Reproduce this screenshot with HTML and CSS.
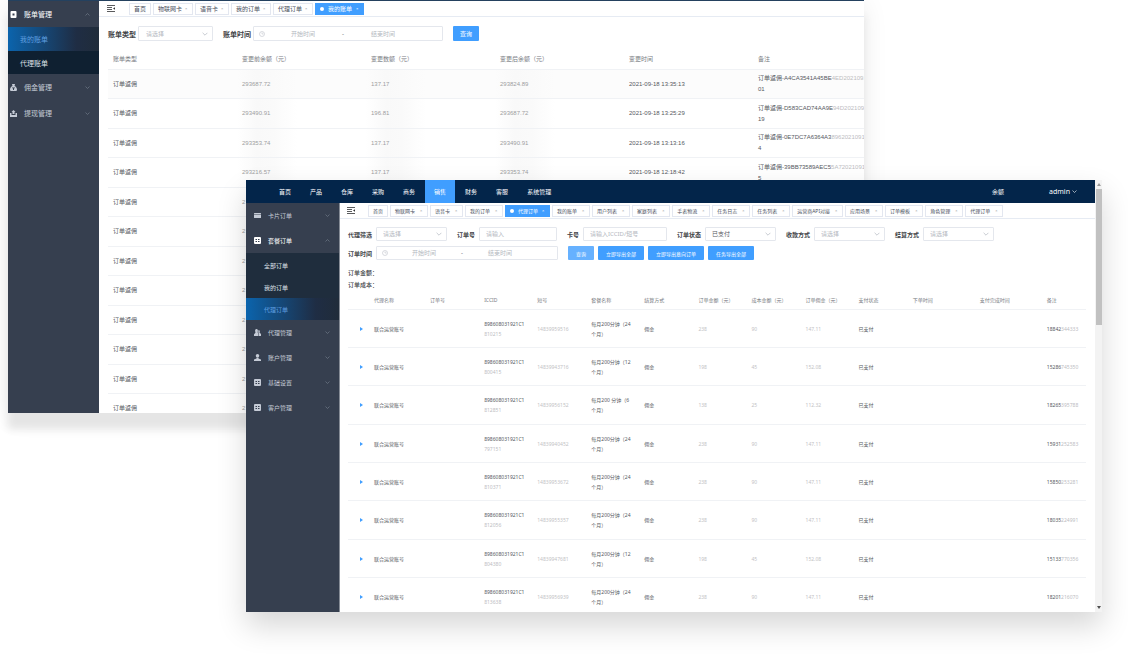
FILE: index.html
```html
<!DOCTYPE html>
<html lang="zh-CN">
<head>
<meta charset="utf-8">
<title>订单与账单管理</title>
<link rel="stylesheet" href="styles.css">
</head>
<body>
<svg class="sprite" aria-hidden="true">
  <symbol id="down" viewBox="0 0 10 6"><path d="M1 1l4 4 4-4" fill="none" stroke="currentColor" stroke-width="1.2"/></symbol>
  <symbol id="up" viewBox="0 0 10 6"><path d="M1 5l4-4 4 4" fill="none" stroke="currentColor" stroke-width="1.2"/></symbol>
  <symbol id="fold" viewBox="0 0 16 14"><path d="M0 1h16M0 5h10M0 9h10M0 13h16" stroke="currentColor" stroke-width="1.600"/><path d="M16 4.500v5L12 7z" fill="currentColor"/></symbol>
  <symbol id="clock" viewBox="0 0 12 12"><circle cx="6" cy="6" r="5" fill="none" stroke="currentColor"/><path d="M6 3v3h3" fill="none" stroke="currentColor"/></symbol>
  <symbol id="bill" viewBox="0 0 14 14"><path fill-rule="evenodd" fill="currentColor" d="M3 0h8a2 2 0 0 1 2 2v10a2 2 0 0 1-2 2H3a2 2 0 0 1-2-2V2a2 2 0 0 1 2-2zm2 5v4h4V5z"/></symbol>
  <symbol id="bag" viewBox="0 0 14 14"><path fill-rule="evenodd" fill="currentColor" d="M4 0h6L9 4c3 1 5 4 5 7 0 2-1 3-3 3H3c-2 0-3-1-3-3 0-3 2-6 5-7zM4 7v1.500h2V12h2V8.500h2V7z"/></symbol>
  <symbol id="withdraw" viewBox="0 0 14 14"><path fill="currentColor" d="M7 0l4 4H9v4H5V4H3zM0 6h3v4h8V6h3v8H0z"/></symbol>
  <symbol id="card" viewBox="0 0 14 14"><path fill="currentColor" d="M1 2h12a1 1 0 0 1 1 1v1H0V3a1 1 0 0 1 1-1zM0 5h14v6a1 1 0 0 1-1 1H1a1 1 0 0 1-1-1z"/></symbol>
  <symbol id="gridbox" viewBox="0 0 14 14"><path fill-rule="evenodd" fill="currentColor" d="M2 0h10a2 2 0 0 1 2 2v10a2 2 0 0 1-2 2H2a2 2 0 0 1-2-2V2a2 2 0 0 1 2-2zm1 4v2h3V4zm5 0v2h3V4zM3 8v2h3V8zm5 0v2h3V8z"/></symbol>
  <symbol id="agents" viewBox="0 0 14 14"><path fill="currentColor" d="M5 0c3 0 3.500 4 2 6.500L9 9v5H0v-3c0-2 3-1.500 3-4.500C1.500 4 2 0 5 0zM9 2c3 0 3 3 2 5l3 3v4h-4V9L8.500 6.500z"/></symbol>
  <symbol id="user" viewBox="0 0 14 14"><circle cx="7" cy="3.500" r="3.500" fill="currentColor"/><path fill="currentColor" d="M5 7h4v2l5 2v3H0v-3l5-2z"/></symbol>
</svg>

<main class="stage">
  <section class="window bills">
    <div class="strip"></div>
    <div class="shell">
      <nav class="side">
        <button class="item on" type="button"><svg class="ico"><use href="#bill"/></svg><span>账单管理</span><svg class="chev"><use href="#up"/></svg></button>
        <div class="sub">
          <a class="leaf active" href="#">我的账单</a>
          <a class="leaf" href="#">代理账单</a>
        </div>
        <button class="item" type="button"><svg class="ico"><use href="#bag"/></svg><span>佣金管理</span><svg class="chev"><use href="#down"/></svg></button>
        <button class="item" type="button"><svg class="ico"><use href="#withdraw"/></svg><span>提现管理</span><svg class="chev"><use href="#down"/></svg></button>
      </nav>
      <div class="content">
        <div class="tabs">
          <svg class="fold"><use href="#fold"/></svg>
          <a class="tab" href="#">首页</a>
          <a class="tab" href="#">物联网卡<i>×</i></a>
          <a class="tab" href="#">语音卡<i>×</i></a>
          <a class="tab" href="#">我的订单<i>×</i></a>
          <a class="tab" href="#">代理订单<i>×</i></a>
          <a class="tab current" href="#"><b></b>我的账单<i>×</i></a>
        </div>
        <div class="body">
          <form class="filters">
            <div class="field"><label for="b-type">账单类型</label><span class="pick"><select id="b-type" class="empty"><option>请选择</option></select><svg><use href="#down"/></svg></span></div>
            <div class="field"><label for="b-from">账单时间</label><span class="range"><svg><use href="#clock"/></svg><input id="b-from" placeholder="开始时间"><span>-</span><input aria-label="结束时间" placeholder="结束时间"></span></div>
            <button class="btn" type="button">查询</button>
          </form>
          <table class="grid">
            <thead><tr><th>账单类型</th><th>变更前余额（元）</th><th>变更数额（元）</th><th>变更后余额（元）</th><th>变更时间</th><th>备注</th></tr></thead>
            <tbody>
              <tr class="hover"><td>订单返佣</td><td class="dim">293687.72</td><td class="dim">137.17</td><td class="dim">293824.89</td><td>2021-09-18 13:35:13</td><td>订单返佣-A4CA3541A45BE<em>4ED20210918</em><br>01</td></tr>
              <tr><td>订单返佣</td><td class="dim">293490.91</td><td class="dim">196.81</td><td class="dim">293687.72</td><td>2021-09-18 13:25:29</td><td>订单返佣-D583CAD74AA9E<em>94D20210918</em><br>19</td></tr>
              <tr><td>订单返佣</td><td class="dim">293353.74</td><td class="dim">137.17</td><td class="dim">293490.91</td><td>2021-09-18 13:13:16</td><td>订单返佣-0E7DC7A6364A3<em>896202109181</em><br>4</td></tr>
              <tr><td>订单返佣</td><td class="dim">293216.57</td><td class="dim">137.17</td><td class="dim">293353.74</td><td>2021-09-18 12:18:42</td><td>订单返佣-39BB73589AEC5<em>5A7202109181</em><br>5</td></tr>
              <tr><td>订单返佣</td><td class="dim">2</td><td></td><td></td><td></td><td></td></tr>
              <tr><td>订单返佣</td><td class="dim">2</td><td></td><td></td><td></td><td></td></tr>
              <tr><td>订单返佣</td><td class="dim">2</td><td></td><td></td><td></td><td></td></tr>
              <tr><td>订单返佣</td><td class="dim">2</td><td></td><td></td><td></td><td></td></tr>
              <tr><td>订单返佣</td><td class="dim">2</td><td></td><td></td><td></td><td></td></tr>
              <tr><td>订单返佣</td><td class="dim">2</td><td></td><td></td><td></td><td></td></tr>
              <tr><td>订单返佣</td><td class="dim">2</td><td></td><td></td><td></td><td></td></tr>
              <tr><td>订单返佣</td><td class="dim">2</td><td></td><td></td><td></td><td></td></tr>
            </tbody>
          </table>
        </div>
      </div>
    </div>
  </section>

  <section class="window orders">
    <div class="app">
      <header class="top">
        <nav class="menu">
          <a href="#">首页</a><a href="#">产品</a><a href="#">仓库</a><a href="#">采购</a><a href="#">商务</a><a class="here" href="#">销售</a><a href="#">财务</a><a href="#">客服</a><a href="#">系统管理</a>
        </nav>
        <a class="balance" href="#">余额</a>
        <button class="account" type="button">admin<svg><use href="#down"/></svg></button>
      </header>
      <div class="shell">
        <nav class="side">
          <button class="item" type="button"><svg class="ico"><use href="#card"/></svg><span>卡片订单</span><svg class="chev"><use href="#down"/></svg></button>
          <button class="item on" type="button"><svg class="ico"><use href="#gridbox"/></svg><span>套餐订单</span><svg class="chev"><use href="#up"/></svg></button>
          <div class="sub">
            <a class="leaf" href="#">全部订单</a>
            <a class="leaf" href="#">我的订单</a>
            <a class="leaf active" href="#">代理订单</a>
          </div>
          <button class="item" type="button"><svg class="ico"><use href="#agents"/></svg><span>代理管理</span><svg class="chev"><use href="#down"/></svg></button>
          <button class="item" type="button"><svg class="ico"><use href="#user"/></svg><span>账户管理</span><svg class="chev"><use href="#down"/></svg></button>
          <button class="item" type="button"><svg class="ico"><use href="#gridbox"/></svg><span>基础设置</span><svg class="chev"><use href="#down"/></svg></button>
          <button class="item" type="button"><svg class="ico"><use href="#gridbox"/></svg><span>客户管理</span><svg class="chev"><use href="#down"/></svg></button>
        </nav>
        <div class="content">
          <div class="tabs">
            <svg class="fold"><use href="#fold"/></svg>
            <a class="tab" href="#">首页</a>
            <a class="tab" href="#">物联网卡<i>×</i></a>
            <a class="tab" href="#">语音卡<i>×</i></a>
            <a class="tab" href="#">我的订单<i>×</i></a>
            <a class="tab current" href="#"><b></b>代理订单<i>×</i></a>
            <a class="tab" href="#">我的账单<i>×</i></a>
            <a class="tab" href="#">用户列表<i>×</i></a>
            <a class="tab" href="#">家庭列表<i>×</i></a>
            <a class="tab" href="#">手表物流<i>×</i></a>
            <a class="tab" href="#">任务日志<i>×</i></a>
            <a class="tab" href="#">任务列表<i>×</i></a>
            <a class="tab" href="#">运营商API对接<i>×</i></a>
            <a class="tab" href="#">应用场景<i>×</i></a>
            <a class="tab" href="#">订单模板<i>×</i></a>
            <a class="tab" href="#">角色管理<i>×</i></a>
            <a class="tab" href="#">代理订单<i>×</i></a>
          </div>
          <div class="body">
            <form>
              <div class="filters">
                <div class="field"><label for="o-agent">代理筛选</label><span class="pick"><select id="o-agent" class="empty"><option>请选择</option></select><svg><use href="#down"/></svg></span></div>
                <div class="field"><label for="o-no">订单号</label><input id="o-no" class="text" placeholder="请输入"></div>
                <div class="field"><label for="o-card">卡号</label><input id="o-card" class="text wide" placeholder="请输入ICCID/短号"></div>
                <div class="field"><label for="o-state">订单状态</label><span class="pick"><select id="o-state"><option>已支付</option></select><svg><use href="#down"/></svg></span></div>
                <div class="field"><label for="o-pay">收款方式</label><span class="pick"><select id="o-pay" class="empty"><option>请选择</option></select><svg><use href="#down"/></svg></span></div>
                <div class="field"><label for="o-settle">结算方式</label><span class="pick"><select id="o-settle" class="empty"><option>请选择</option></select><svg><use href="#down"/></svg></span></div>
              </div>
              <div class="filters">
                <div class="field"><label for="o-from">订单时间</label><span class="range"><svg><use href="#clock"/></svg><input id="o-from" placeholder="开始时间"><span>-</span><input aria-label="结束时间" placeholder="结束时间"></span></div>
                <div class="actions">
                  <button class="btn soft" type="button">查询</button>
                  <button class="btn" type="button">立即导出全部</button>
                  <button class="btn" type="button">立即导出意向订单</button>
                  <button class="btn" type="button">任务导出全部</button>
                </div>
              </div>
            </form>
            <div class="totals"><p>订单金额：</p><p>订单成本：</p></div>
            <table class="grid">
              <colgroup><col class="c-open"><col class="c-agent"><col class="c-even"><col class="c-odd"><col class="c-even"><col class="c-odd"><col class="c-even"><col class="c-odd"><col class="c-even"><col class="c-odd"><col class="c-even"><col class="c-time"><col class="c-time"><col class="c-note"></colgroup>
              <thead><tr><th></th><th>代理名称</th><th>订单号</th><th>ICCID</th><th>短号</th><th>套餐名称</th><th>结算方式</th><th>订单金额（元）</th><th>成本金额（元）</th><th>订单佣金（元）</th><th>支付状态</th><th>下单时间</th><th>支付完成时间</th><th>备注</th></tr></thead>
              <tbody>
                <tr><td><span class="open"></span></td><td>联合运营账号</td><td></td><td>898608031921C1<br><em>810215</em></td><td class="dim">14839959516</td><td>每月200分钟（24<br>个月）</td><td>佣金</td><td class="dim">238</td><td class="dim">90</td><td class="dim">147.11</td><td>已支付</td><td></td><td></td><td>18842<em>344333</em></td></tr>
                <tr><td><span class="open"></span></td><td>联合运营账号</td><td></td><td>898608031921C1<br><em>800415</em></td><td class="dim">14839943716</td><td>每月200分钟（12<br>个月）</td><td>佣金</td><td class="dim">198</td><td class="dim">45</td><td class="dim">152.08</td><td>已支付</td><td></td><td></td><td>15286<em>745350</em></td></tr>
                <tr><td><span class="open"></span></td><td>联合运营账号</td><td></td><td>898608031921C1<br><em>812851</em></td><td class="dim">14839956152</td><td>每月200 分钟（6<br>个月）</td><td>佣金</td><td class="dim">138</td><td class="dim">25</td><td class="dim">112.32</td><td>已支付</td><td></td><td></td><td>18265<em>395788</em></td></tr>
                <tr><td><span class="open"></span></td><td>联合运营账号</td><td></td><td>898608031921C1<br><em>797151</em></td><td class="dim">14839940452</td><td>每月200分钟（24<br>个月）</td><td>佣金</td><td class="dim">238</td><td class="dim">90</td><td class="dim">147.11</td><td>已支付</td><td></td><td></td><td>15931<em>252583</em></td></tr>
                <tr><td><span class="open"></span></td><td>联合运营账号</td><td></td><td>898608031921C1<br><em>810371</em></td><td class="dim">14839953672</td><td>每月200分钟（24<br>个月）</td><td>佣金</td><td class="dim">238</td><td class="dim">90</td><td class="dim">147.11</td><td>已支付</td><td></td><td></td><td>15850<em>253281</em></td></tr>
                <tr><td><span class="open"></span></td><td>联合运营账号</td><td></td><td>898608031921C1<br><em>812056</em></td><td class="dim">14839955357</td><td>每月200分钟（24<br>个月）</td><td>佣金</td><td class="dim">238</td><td class="dim">90</td><td class="dim">147.11</td><td>已支付</td><td></td><td></td><td>18035<em>224991</em></td></tr>
                <tr><td><span class="open"></span></td><td>联合运营账号</td><td></td><td>898608031921C1<br><em>804380</em></td><td class="dim">14839947681</td><td>每月200分钟（12<br>个月）</td><td>佣金</td><td class="dim">198</td><td class="dim">45</td><td class="dim">152.08</td><td>已支付</td><td></td><td></td><td>15133<em>770356</em></td></tr>
                <tr><td><span class="open"></span></td><td>联合运营账号</td><td></td><td>898608031921C1<br><em>813638</em></td><td class="dim">14839956939</td><td>每月200分钟（24<br>个月）</td><td>佣金</td><td class="dim">238</td><td class="dim">90</td><td class="dim">147.11</td><td>已支付</td><td></td><td></td><td>18201<em>216070</em></td></tr>
              </tbody>
            </table>
          </div>
        </div>
      </div>
    </div>
    <div class="scroll"><span class="arrow upward"></span><span class="thumb"></span><span class="arrow downward"></span></div>
  </section>
</main>
</body>
</html>
```

FILE: styles.css
```css
* { box-sizing: border-box; }
body { margin: 0; background: #fff; font-family: "Liberation Sans", "Noto Sans CJK SC", sans-serif; color: #55585e; }
a { color: inherit; text-decoration: none; }
button, input, select { font: inherit; color: inherit; margin: 0; }
button { border: 0; background: none; padding: 0; }
.sprite { display: none; }

/* canvas that holds the two overlapping windows */
.stage { position: relative; min-height: 100vh; overflow: hidden; }
.window { position: absolute; overflow: hidden; background: #fff; }
.bills { top: 0; left: 8px; right: 264px; bottom: 244px; font-size: 6px; display: flex; flex-direction: column; box-shadow: 0 16px 8px #e5e5e5, 0 4px 24px rgba(0, 0, 0, .08); }
.orders { top: 180px; left: 246px; right: 26px; bottom: 45px; font-size: 5px; font-family: "Noto Sans", "Noto Sans CJK SC", sans-serif; display: flex; box-shadow: 0 14px 28px rgba(0, 0, 0, .16); }
.app { flex: 1; min-width: 0; display: flex; flex-direction: column; }
.strip { flex: none; height: 1px; background: #24415f; }
.shell { flex: 1; min-height: 0; display: flex; }
.content { flex: 1; min-width: 0; overflow: hidden; }

/* side menu */
.side { flex: none; width: 91px; background: #363f4f; color: #c5cbd6; font-size: 7px; }
.item { display: flex; align-items: center; width: 100%; height: 26px; padding: 0 9px 0 2px; gap: 7px; text-align: left; }
.item span { flex: 1; }
.item.on { color: #fff; }
.ico { width: 7px; height: 7px; }
.chev { width: 5px; height: 3px; color: #7b8492; }
.sub { background: #0f2031; }
.leaf { display: flex; align-items: center; height: 23px; padding-left: 12px; color: #dfe3ea; }
.leaf.active { color: #5f9fe0; background: linear-gradient(90deg, #0b64ad, #1f2d44 75%, #202c3a); }
.bills .leaf.active { height: 24px; }
.orders .side { width: 94px; font-size: 6px; border-right: 1px solid #868c96; }
.orders .item { height: 25px; padding: 0 9px 0 8px; }
.orders .sub { background: #1f2d3d; padding-top: 1px; }
.orders .leaf { height: 22px; padding-left: 18px; }

/* top bar */
.top { flex: none; display: flex; align-items: stretch; height: 23px; padding: 0 18px 0 24px; background: #03254a; color: #fff; font-size: 6px; }
.menu { flex: 1; display: flex; gap: 1px; }
.menu a { display: flex; align-items: center; padding: 0 9px; }
.menu .here { background: #409eff; }
.balance { display: flex; align-items: center; margin-right: 45px; }
.account { display: flex; align-items: center; gap: 2px; font-size: 7px; }
.account svg { width: 5px; height: 3px; }

/* page tabs */
.tabs { display: flex; align-items: center; gap: 2px; height: 16px; padding-left: 8px; border-bottom: 1px solid #e6ebf3; }
.fold { flex: none; width: 8px; height: 7px; margin-right: 12px; color: #303133; }
.tab { flex: none; display: flex; align-items: center; gap: 3px; height: 12px; padding: 0 4px; border: 1px solid #e3e7f0; color: #495060; white-space: nowrap; }
.tab i { width: 3px; font-style: normal; font-size: 4px; color: #999; }
.tab b { width: 4px; height: 4px; border-radius: 50%; background: #fff; }
.tab.current, .tab.current i { color: #fff; }
.tab.current { gap: 4px; background: #409eff; border-color: #409eff; }
.orders .fold { margin-right: 11px; }
.orders .tabs { padding-left: 7px; }
.orders .tab { gap: 5px; }
.orders .tab.current { gap: 4px; }

/* filters */
.body { padding: 9px 0 0 9px; }
.filters { display: flex; align-items: center; gap: 10px; }
.field { display: flex; align-items: center; gap: 2px; }
label { font-size: 7px; font-weight: bold; color: #404246; white-space: nowrap; }
.pick { position: relative; display: block; }
.pick svg { position: absolute; right: 5px; top: 6px; width: 6px; height: 4px; color: #b4b8c0; }
select, .text, .range { display: block; height: 15px; border: 1px solid #e4e7ed; border-radius: 1px; background: #fff; outline: 0; font-size: 6px; }
select { appearance: none; width: 75px; padding: 0 7px; }
select.empty { color: #b4b8c0; }
.text { width: 78px; padding: 0 6px; }
.text.wide { width: 84px; }
input::placeholder { color: #b4b8c0; opacity: 1; }
.range { display: flex; align-items: center; width: 190px; padding: 0 21px 0 5px; }
.range svg { flex: none; width: 6px; height: 6px; color: #b4b8c0; }
.range input { flex: 1; min-width: 0; border: 0; padding: 0; text-align: center; background: none; outline: 0; }
.range span { width: 4px; text-align: center; }
.btn { height: 15px; padding: 0 7px; border-radius: 1px; background: #409eff; color: #fff; white-space: nowrap; }
.btn.soft { background: #66b1ff; }
.orders .body { padding: 8px 9px 0 8px; }
.orders label { font-size: 6px; }
.orders .field { gap: 4px; }
.orders .filters + .filters { margin-top: 5px; }
.orders select, .orders .text, .orders .range, .orders .btn { height: 14px; }
.orders .pick svg { top: 5px; }
.orders select { width: 71px; padding: 0 6px; }
.orders .range { width: 182px; }
.orders .btn { padding: 0 8px; }
.actions { display: flex; gap: 4px; }
.totals { padding: 7px 0 0; font-size: 6px; line-height: 12px; color: #404246; font-weight: 500; }
.totals p { margin: 0; }

/* tables */
.grid { table-layout: fixed; border-collapse: separate; border-spacing: 0; width: 100%; }
.grid th, .grid td { padding: 0 0 0 5px; text-align: left; font-weight: normal; vertical-align: middle; white-space: nowrap; line-height: 11px; border-bottom: 1px solid #f0f2f5; }
.grid th { color: #787b82; }
.grid em { font-style: normal; color: #bcbcbf; }
.grid .dim { color: #9d9ea1; }
.bills .grid { width: calc(100% + 18px); margin-top: 9px; }
.bills .grid th { height: 20px; }
.bills .grid td { height: 29px; }
.bills .grid tr:nth-child(even) td { height: 30px; }
.bills .hover td { background-color: #fcfcfc; }
.bills .dim { background-image: linear-gradient(90deg, transparent, #f9f9f9 20px, #fafafa 36px, transparent 60px); }
.orders .grid th, .orders .grid td { padding-left: 3px; line-height: 10px; }
.orders .grid th { height: 19px; }
.orders .grid td { height: 38px; }
.orders .grid tr:nth-child(3n) td { height: 39px; }
.orders .grid .dim { color: #c2c2c5; }
.c-open { width: 23px; }
.c-agent { width: 56px; }
.c-even { width: 54px; }
.c-odd { width: 53px; }
.c-time { width: 67px; }
.c-note { width: 42px; }
.open { display: block; width: 0; margin-left: 9px; border: 2px solid transparent; border-left: 3px solid #409eff; border-right: 0; }

/* scroll bar */
.scroll { flex: none; width: 7px; background: #f3f3f3; display: flex; flex-direction: column; align-items: center; padding: 3px 0; }
.thumb { width: 6px; height: 136px; margin: 3px 0 auto; background: #c1c1c1; }
.arrow { width: 0; border: 2px solid transparent; }
.upward { border-top: 0; border-bottom: 3px solid #999; }
.downward { border-bottom: 0; border-top: 3px solid #505050; }
```
